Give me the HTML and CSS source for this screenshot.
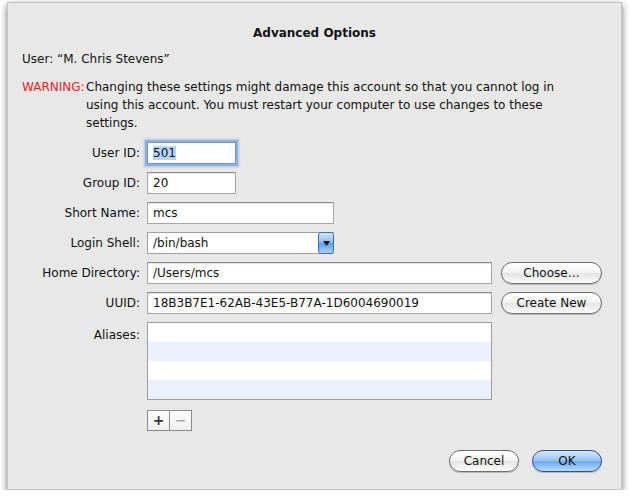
FILE: index.html
```html
<!DOCTYPE html>
<html lang="en">
<head>
<meta charset="utf-8">
<title>Advanced Options</title>
<link rel="stylesheet" href="styles.css">
</head>
<body>

<div class="sheet">
  <h1 class="title">Advanced Options</h1>
  <p class="user">User: “M. Chris Stevens”</p>

  <div class="warning">
    <span class="warn-label">WARNING:</span>
    <span class="warn-text">Changing these settings might damage this account so that you cannot log in using this account. You must restart your computer to use changes to these settings.</span>
  </div>

  <div class="form">
    <label class="lbl">User ID:</label>
    <div class="field focus w-small"><span class="sel">501</span></div>
    <span></span>

    <label class="lbl">Group ID:</label>
    <div class="field w-small">20</div>
    <span></span>

    <label class="lbl">Short Name:</label>
    <div class="field w-mid">mcs</div>
    <span></span>

    <label class="lbl">Login Shell:</label>
    <div class="popup w-mid">
      <span class="popup-text">/bin/bash</span>
      <span class="popup-arrow">
        <svg width="7" height="5" viewBox="0 0 7 5"><path d="M0 0h7L3.5 5z" fill="#111"/></svg>
      </span>
    </div>
    <span></span>

    <label class="lbl">Home Directory:</label>
    <div class="field">/Users/mcs</div>
    <button class="btn">Choose…</button>

    <label class="lbl">UUID:</label>
    <div class="field">18B3B7E1-62AB-43E5-B77A-1D6004690019</div>
    <button class="btn">Create New</button>

    <label class="lbl lbl-top">Aliases:</label>
    <div class="list">
      <div class="row"></div>
      <div class="row alt"></div>
      <div class="row"></div>
      <div class="row alt"></div>
    </div>
    <span></span>

    <span></span>
    <div class="plusminus">
      <span class="pm">+</span>
      <span class="pm off">−</span>
    </div>
    <span></span>
  </div>

  <div class="actions">
    <button class="btn">Cancel</button>
    <button class="btn default">OK</button>
  </div>
</div>

</body>
</html>
```

FILE: styles.css
```css
* {
  box-sizing: border-box;
}

body {
  margin: 0;
  background: #ffffff;
  font-family: "DejaVu Sans", "Noto Sans", sans-serif;
  font-size: 12px;
  color: #111;
}

/* the sheet window */
.sheet {
  width: 615px;
  height: 488px;
  margin: 2px 0 0 7px;
  background: #e8e8e8;
  border: 1px solid #c4c4c4;
  box-shadow: 0 3px 7px rgba(0, 0, 0, 0.55);
  padding: 21px 0 0 14px;
}

.title {
  margin: 0;
  font-size: 12px;
  font-weight: bold;
  text-align: center;
  line-height: 18px;
  padding-right: 14px;
}

.user {
  margin: 8px 0 0 0;
  line-height: 18px;
}

.warning {
  display: flex;
  margin-top: 10px;
  line-height: 18px;
}

.warn-label {
  color: #ee1c1c;
  width: 64px;
  flex: none;
}

.warn-text {
  width: 482px;
}

/* form grid */
.form {
  display: grid;
  grid-template-columns: 118px 345px 101px;
  column-gap: 7px;
  row-gap: 8px;
  margin-top: 10px;
  align-items: center;
}

.form .btn {
  margin-left: 2px;
}

.lbl {
  text-align: right;
  line-height: 22px;
}

.lbl-top {
  align-self: start;
  line-height: 26px;
}

.field {
  height: 22px;
  background: #fff;
  border: 1px solid #a6a6a6;
  border-top-color: #8c8c8c;
  box-shadow: inset 0 1px 1px rgba(0, 0, 0, 0.12);
  padding: 0 5px;
  line-height: 20px;
  white-space: nowrap;
  overflow: hidden;
}

.w-small {
  width: 89px;
}

.w-mid {
  width: 187px;
}

.focus {
  border-color: #6d94cc;
  box-shadow: 0 0 0 2px #8cb0e2, 0 0 2px 3px rgba(110, 150, 210, 0.45);
}

.sel {
  background: #b5d5fd;
}

.popup {
  display: flex;
  height: 22px;
  background: #fff;
  border: 1px solid #a0a0a0;
  border-right: none;
}

.popup-text {
  flex: 1;
  padding-left: 5px;
  line-height: 20px;
}

.popup-arrow {
  width: 16px;
  height: 22px;
  margin: -1px 0;
  display: flex;
  align-items: center;
  justify-content: center;
  border: 1px solid #3f6fb8;
  border-radius: 3px;
  background: linear-gradient(#d3e6fc 0%, #86b8f0 50%, #5f9ce8 51%, #a9d3fc 100%);
}

/* aliases list */
.list {
  height: 78px;
  border: 1px solid #9c9c9c;
  background: #fff;
}

.row {
  height: 19px;
}

.row.alt {
  background: #ebf1fc;
}

.plusminus {
  display: flex;
  width: 45px;
  margin-top: 2px;
  border: 1px solid #8a8a8a;
}

.pm {
  flex: 1;
  height: 19px;
  text-align: center;
  font-size: 14px;
  font-weight: bold;
  line-height: 18px;
  color: #333;
  background: linear-gradient(#fdfdfd, #efefef);
}

.pm + .pm {
  border-left: 1px solid #8a8a8a;
}

.pm.off {
  color: #aaa;
}

/* aqua push buttons */
.btn {
  height: 22px;
  padding: 0;
  width: 101px;
  border: 1px solid #6e6e6e;
  border-radius: 11px;
  background: linear-gradient(#ffffff 0%, #f3f3f3 50%, #e4e4e4 51%, #fbfbfb 100%);
  font-family: inherit;
  font-size: 12px;
  color: #111;
  box-shadow: 0 1px 1px rgba(0, 0, 0, 0.2);
}

.actions {
  display: flex;
  justify-content: flex-end;
  gap: 13px;
  margin-top: 19px;
  margin-right: 19px;
}

.actions .btn {
  width: 70px;
}

.btn.default {
  border-color: #2f4f9c;
  background: linear-gradient(#d6e8fc 0%, #9dc8f5 45%, #6eaaf0 55%, #b9ddff 100%);
}
```
